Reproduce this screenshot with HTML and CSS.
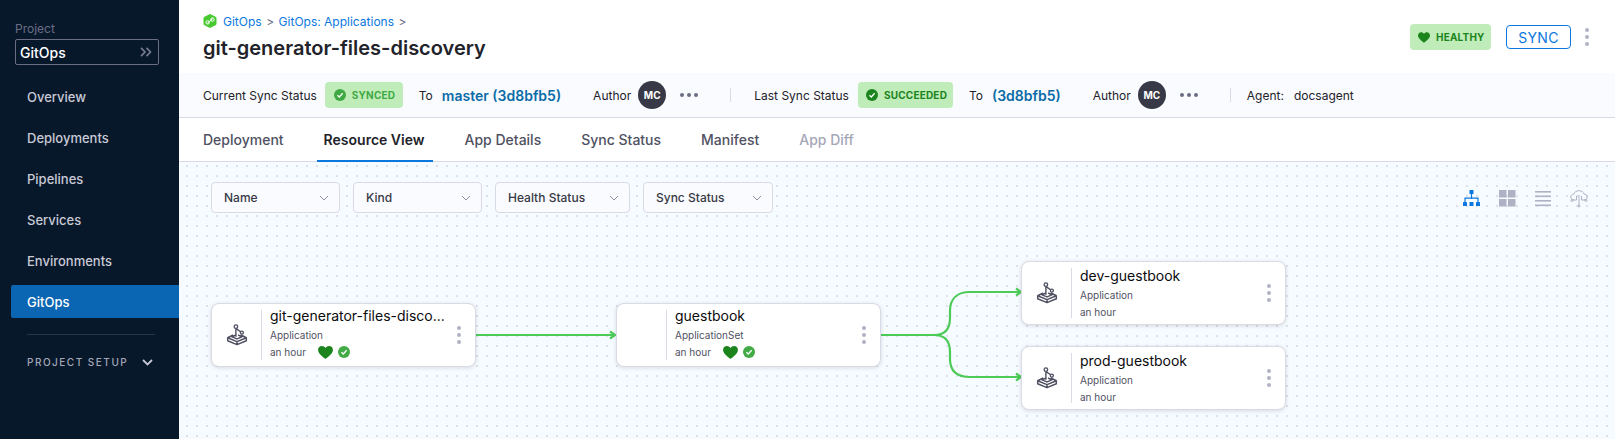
FILE: index.html
```html
<!DOCTYPE html>
<html lang="en">
<head>
    <meta charset="UTF-8">
    <title>GitOps: Applications</title>
    <link rel="stylesheet" href="styles.css">
</head>

<body>
    <svg class="defs" width="0" height="0">
        <symbol id="joystick" viewBox="0 0 20 20">
            <path d="M1.500 12.500 6.500 10M18.500 12.500 13.500 10M1.500 12.500 10 16 18.500 12.500V15.200L10 18.800 1.500 15.200ZM10 16V18.800M9 11.500V3.500M9 10 5.500 11.700 10 13.600 14.500 11.700 11 10M9.500 4.500 14 7.500" fill="none" stroke="#4f5162" stroke-width="1.300" stroke-linejoin="round"/>
            <circle cx="9" cy="2.400" r="1.600" fill="#fff" stroke="#4f5162" stroke-width="1.200"/>
            <circle cx="14.400" cy="7.800" r="1.400" fill="#fff" stroke="#4f5162" stroke-width="1.200"/>
        </symbol>
        <symbol id="heart" viewBox="0 0 16 14">
            <path d="M8 14C6 12 0 8.500 0 4.200 0 1.800 1.900 0 4.200 0 5.800 0 7.200.8 8 2.100 8.800.8 10.200 0 11.800 0 14.100 0 16 1.800 16 4.200 16 8.500 10 12 8 14Z"/>
        </symbol>
        <symbol id="check" viewBox="0 0 14 14">
            <circle cx="7" cy="7" r="7"/>
            <path d="M4 7.200 6.200 9.300 10.100 5" fill="none" stroke="#fff" stroke-width="1.500"/>
        </symbol>
        <symbol id="chevron" viewBox="0 0 10 6">
            <path d="M1 1 5 5 9 1" fill="none" stroke="currentColor" stroke-width="1"/>
        </symbol>
    </svg>

    <aside class="sidebar">
        <div class="project-label">Project</div>
        <div class="project-box">
            <span>GitOps</span>
            <svg width="12" height="10" viewBox="0 0 12 10"><path d="M1 .8 5 5 1 9.200M6.500 .8 10.500 5 6.500 9.200" fill="none" stroke="#777a90" stroke-width="1.700"/></svg>
        </div>
        <nav class="nav">
            <a class="nav-item">Overview</a>
            <a class="nav-item">Deployments</a>
            <a class="nav-item">Pipelines</a>
            <a class="nav-item">Services</a>
            <a class="nav-item">Environments</a>
            <a class="nav-item active">GitOps</a>
        </nav>
        <div class="nav-divider"></div>
        <div class="nav-section">
            <span>PROJECT SETUP</span>
            <svg width="11" height="7" viewBox="0 0 11 7"><path d="M1 1 5.500 5.500 10 1" fill="none" stroke="#c4c6d2" stroke-width="1.800"/></svg>
        </div>
    </aside>

    <main class="main">
        <header class="page-header">
            <div>
                <div class="breadcrumb">
                    <svg class="gitops-logo" width="14" height="14" viewBox="0 0 14 14">
                        <path d="M7 .5 13 3.500V10.500L7 13.500 1 10.500V3.500Z" fill="#47c92f" stroke="#47c92f" stroke-linejoin="round"/>
                        <path d="M9.800 4.700 4.200 9.300" stroke="#fff" stroke-width="1"/>
                        <circle cx="4.600" cy="8.400" r="1.700" fill="none" stroke="#fff"/>
                        <circle cx="9.400" cy="5.600" r="1.700" fill="none" stroke="#fff"/>
                    </svg>
                    <a>GitOps</a>
                    <span class="crumb-sep">&gt;</span>
                    <a>GitOps: Applications</a>
                    <span class="crumb-sep">&gt;</span>
                </div>
                <h1>git-generator-files-discovery</h1>
            </div>
            <div class="header-actions">
                <span class="badge badge-healthy">
                    <svg width="12" height="11"><use href="#heart"/></svg>
                    HEALTHY
                </span>
                <button class="sync-btn">SYNC</button>
                <span class="kebab"><i></i><i></i><i></i></span>
            </div>
        </header>

        <div class="sync-bar">
            <span class="sync-label">Current Sync Status</span>
            <span class="badge badge-synced">
                <svg width="12" height="12"><use href="#check"/></svg>
                SYNCED
            </span>
            <span class="to-label">To</span>
            <a class="revision">master (3d8bfb5)</a>
            <span class="author-label">Author</span>
            <span class="avatar">MC</span>
            <span class="more"><i></i><i></i><i></i></span>
            <span class="bar-divider bar-divider-first"></span>
            <span class="sync-label">Last Sync Status</span>
            <span class="badge badge-succeeded">
                <svg width="12" height="12"><use href="#check"/></svg>
                SUCCEEDED
            </span>
            <span class="to-label">To</span>
            <a class="revision">(3d8bfb5)</a>
            <span class="author-label">Author</span>
            <span class="avatar">MC</span>
            <span class="more"><i></i><i></i><i></i></span>
            <span class="bar-divider"></span>
            <span class="agent">Agent:</span>
            <span>docsagent</span>
        </div>

        <div class="tabs">
            <a class="tab">Deployment</a>
            <a class="tab active">Resource View</a>
            <a class="tab">App Details</a>
            <a class="tab">Sync Status</a>
            <a class="tab">Manifest</a>
            <a class="tab disabled">App Diff</a>
        </div>

        <section class="canvas">
            <div class="toolbar">
                <div class="filters">
                    <div class="filter">Name <svg width="10" height="6"><use href="#chevron"/></svg></div>
                    <div class="filter">Kind <svg width="10" height="6"><use href="#chevron"/></svg></div>
                    <div class="filter filter-health">Health Status <svg width="10" height="6"><use href="#chevron"/></svg></div>
                    <div class="filter filter-sync">Sync Status <svg width="10" height="6"><use href="#chevron"/></svg></div>
                </div>
                <div class="views">
                    <svg width="17" height="17" viewBox="0 0 17 17" fill="#0b78e0">
                        <rect x="6.500" y="0" width="4" height="4" rx=".6"/>
                        <path d="M8.500 4V9M2 12V8.200H15V12" fill="none" stroke="#0b78e0" stroke-width="1.200"/>
                        <rect x="0" y="12" width="4" height="4" rx=".6"/>
                        <rect x="6.500" y="12" width="4" height="4" rx=".6"/>
                        <rect x="13" y="12" width="4" height="4" rx=".6"/>
                    </svg>
                    <svg width="17" height="17" viewBox="0 0 17 17" fill="#b0b1c4">
                        <rect width="7.500" height="7.500"/>
                        <rect x="9" width="7.500" height="7.500"/>
                        <rect y="9" width="7.500" height="7.500"/>
                        <rect x="9" y="9" width="7.500" height="7.500"/>
                    </svg>
                    <svg width="17" height="17" viewBox="0 0 17 17" fill="#b0b1c4">
                        <rect y="1" width="16" height="1.600"/>
                        <rect y="5.500" width="16" height="1.600"/>
                        <rect y="10" width="16" height="1.600"/>
                        <rect y="14.500" width="16" height="1.600"/>
                    </svg>
                    <svg class="view-cloud" width="18" height="18" viewBox="0 0 18 18" fill="none" stroke="#b0b1c4" stroke-width="1">
                        <path d="M4 10C2 10 .8 8.700.8 7 .8 5.300 2.200 4 3.800 4.200 4.500 2 6.500.7 9 .7 11.500.7 13.500 2 14.200 4.200 15.800 4 17.200 5.300 17.200 7 17.200 8.700 16 10 14 10"/>
                        <path d="M9 5V15M6.500 6V10H2.800M11.500 6V10H15.200"/>
                        <circle cx="1.900" cy="10.500" r="1"/>
                        <circle cx="16.100" cy="10.500" r="1"/>
                        <circle cx="9" cy="16" r="1"/>
                    </svg>
                </div>
            </div>

            <svg class="edges" width="1436" height="277" viewBox="179 162 1436 277" fill="none" stroke="#4dcb58" stroke-width="2.200">
                <path d="M475 335H615M610 331.500 615 335 610 338.500" />
                <path d="M880 335H934C945 335 950 329 950 318V311C950 299 957 292 970 292H1021M1016 288.500 1021 292 1016 295.500"/>
                <path d="M934 335C945 335 950 341 950 352V359C950 371 957 377 970 377H1021M1016 373.500 1021 377 1016 380.500"/>
            </svg>

            <div class="node node-root">
                <div class="node-icon"><svg width="22" height="22"><use href="#joystick"/></svg></div>
                <div class="node-body">
                    <div class="node-name">git-generator-files-disco...</div>
                    <div class="node-kind">Application</div>
                    <div class="node-meta has-status">
                        <span>an hour</span>
                        <svg class="heart" width="15" height="13"><use href="#heart"/></svg>
                        <svg class="ok" width="12" height="12"><use href="#check"/></svg>
                    </div>
                </div>
                <span class="kebab"><i></i><i></i><i></i></span>
            </div>

            <div class="node node-set">
                <div class="node-icon"></div>
                <div class="node-body">
                    <div class="node-name">guestbook</div>
                    <div class="node-kind">ApplicationSet</div>
                    <div class="node-meta has-status">
                        <span>an hour</span>
                        <svg class="heart" width="15" height="13"><use href="#heart"/></svg>
                        <svg class="ok" width="12" height="12"><use href="#check"/></svg>
                    </div>
                </div>
                <span class="kebab"><i></i><i></i><i></i></span>
            </div>

            <div class="node node-dev">
                <div class="node-icon"><svg width="22" height="22"><use href="#joystick"/></svg></div>
                <div class="node-body">
                    <div class="node-name">dev-guestbook</div>
                    <div class="node-kind">Application</div>
                    <div class="node-meta"><span>an hour</span></div>
                </div>
                <span class="kebab"><i></i><i></i><i></i></span>
            </div>

            <div class="node node-prod">
                <div class="node-icon"><svg width="22" height="22"><use href="#joystick"/></svg></div>
                <div class="node-body">
                    <div class="node-name">prod-guestbook</div>
                    <div class="node-kind">Application</div>
                    <div class="node-meta"><span>an hour</span></div>
                </div>
                <span class="kebab"><i></i><i></i><i></i></span>
            </div>
        </section>
    </main>
</body>
</html>
```

FILE: styles.css
```css
* {
    box-sizing: border-box;
}
body {
    font-family: Inter, "Liberation Sans", sans-serif;
    margin: 0;
    display: flex;
    height: 439px;
    overflow: hidden;
    color: #22222a;
    background-color: #fff;
}
.defs {
    position: absolute;
}

/* sidebar */
.sidebar {
    width: 179px;
    flex-shrink: 0;
    background-color: #07182b;
    padding: 21px 0 0 0;
    color: #d9dae5;
}
.project-label {
    font-size: 12px;
    line-height: 15px;
    color: #6b6d85;
    padding-left: 15px;
}
.project-box {
    display: flex;
    justify-content: space-between;
    align-items: center;
    width: 144px;
    height: 26px;
    margin: 3px 0 0 15px;
    padding: 0 6px 0 4px;
    border: 1px solid #6b6d85;
    border-radius: 2px;
    font-size: 14px;
    font-weight: 500;
    color: #fff;
}
.nav {
    display: flex;
    flex-direction: column;
    gap: 8px;
    margin: 15px 0 0 11px;
}
.nav-item {
    display: flex;
    align-items: center;
    height: 33px;
    padding-left: 16px;
    font-size: 13px;
    font-weight: 500;
    color: #c9cad6;
    border-radius: 2px 0 0 2px;
}
.nav-item.active {
    background-color: #0a66b2;
    color: #fff;
}
.nav-divider {
    height: 1px;
    margin: 16px 24px 0 27px;
    background-color: #26374a;
}
.nav-section {
    display: flex;
    align-items: center;
    justify-content: space-between;
    margin: 20px 26px 0 27px;
    font-size: 10px;
    font-weight: 500;
    letter-spacing: 1.5px;
    color: #a5a7b8;
    height: 14px;
}

/* header */
.main {
    flex: 1;
    min-width: 0;
    display: flex;
    flex-direction: column;
}
.page-header {
    display: flex;
    justify-content: space-between;
    height: 73px;
    padding: 13px 26px 0 24px;
}
.breadcrumb {
    display: flex;
    align-items: center;
    height: 16px;
    font-size: 12px;
    color: #0b78e0;
}
.gitops-logo {
    margin-right: 6px;
}
.crumb-sep {
    margin: 0 4.500px;
    color: #6b6d85;
}
h1 {
    margin: 4px 0 0 0;
    font-size: 20px;
    line-height: 30px;
    font-weight: 600;
    color: #22222a;
}
.header-actions {
    display: flex;
    align-items: center;
    height: 26px;
    margin-top: 11px;
}
.badge {
    display: inline-flex;
    align-items: center;
    gap: 6px;
    height: 26px;
    border-radius: 4px;
    background-color: #c0ecb9;
    font-size: 10px;
    font-weight: 700;
    letter-spacing: .2px;
}
.badge-healthy {
    width: 81px;
    padding-left: 8px;
    color: #1b841d;
    fill: #1b841d;
}
.badge-synced {
    width: 78px;
    margin: 0 16px 0 8px;
    padding-left: 9px;
    color: #3fa944;
    fill: #3fa944;
}
.badge-succeeded {
    width: 95px;
    margin: 0 16px 0 9px;
    padding-left: 8px;
    color: #1b841d;
    fill: #1b841d;
}
.sync-btn {
    width: 65px;
    height: 24px;
    margin-left: 15px;
    padding: 0;
    border: 1px solid #0b78e0;
    border-radius: 4px;
    background-color: #fff;
    font-family: inherit;
    font-size: 14px;
    color: #0b78e0;
    letter-spacing: .3px;
}
.kebab {
    display: inline-flex;
    flex-direction: column;
    gap: 3px;
}
.kebab i {
    display: block;
    width: 4px;
    height: 4px;
    border-radius: 50%;
    background-color: #b0b1c4;
}
.header-actions .kebab {
    margin-left: 14px;
}

/* sync status bar */
.sync-bar {
    display: flex;
    align-items: center;
    height: 45px;
    padding-left: 24px;
    background-color: #fafbfe;
    border-bottom: 1px solid #d9dae5;
    font-size: 12px;
    color: #22222a;
}
.revision {
    font-size: 14px;
    font-weight: 600;
    color: #0b6ca8;
}
.to-label {
    margin-right: 9px;
}
.author-label {
    margin-left: 32px;
}
.avatar {
    display: flex;
    align-items: center;
    justify-content: center;
    width: 28px;
    height: 28px;
    margin-left: 7px;
    border-radius: 50%;
    background-color: #383946;
    color: #fff;
    font-size: 10px;
    font-weight: 700;
}
.more {
    display: inline-flex;
    gap: 3px;
    margin-left: 14px;
}
.more i {
    display: block;
    width: 4px;
    height: 4px;
    border-radius: 50%;
    background-color: #6b6d85;
}
.bar-divider {
    width: 1px;
    height: 14px;
    margin: 0 16px 0 32px;
    background-color: #d9dae5;
}
.bar-divider-first {
    margin-right: 23px;
}
.agent {
    margin-right: 10px;
}

/* tabs */
.tabs {
    display: flex;
    gap: 40px;
    height: 44px;
    padding-left: 24px;
    border-bottom: 1px solid #d9dae5;
}
.tab {
    position: relative;
    display: flex;
    align-items: center;
    font-size: 14px;
    font-weight: 500;
    color: #4f5162;
}
.tab.active {
    color: #22222a;
    font-weight: 600;
}
.tab.active::after {
    content: "";
    position: absolute;
    left: -7px;
    right: -8px;
    bottom: -1px;
    height: 2px;
    background-color: #0b78e0;
}
.tab.disabled {
    color: #a5a7b8;
}

/* resource canvas */
.canvas {
    position: relative;
    flex: 1;
    background-color: #f6fbff;
    background-image: radial-gradient(circle, #cfd1dd .6px, transparent .9px);
    background-size: 10px 10px;
    background-position: 3px -1px;
}
.toolbar {
    display: flex;
    justify-content: space-between;
    align-items: flex-start;
    padding: 20px 27px 0 32px;
}
.filters {
    display: flex;
    gap: 13px;
}
.filter {
    display: flex;
    align-items: center;
    justify-content: space-between;
    width: 129px;
    height: 31px;
    padding: 0 10px 0 12px;
    border: 1px solid #d9dae5;
    border-radius: 4px;
    background-color: #fafbfe;
    font-size: 12px;
    font-weight: 500;
    color: #383946;
}
.filter svg {
    color: #8f90a6;
}
.filter-health {
    width: 135px;
}
.filter-sync {
    width: 130px;
}
.views {
    display: flex;
    gap: 19px;
    margin-top: 8px;
}
.view-cloud {
    margin-left: -1px;
}
.edges {
    position: absolute;
    left: 0;
    top: 0;
}
.node {
    position: absolute;
    display: flex;
    align-items: center;
    width: 265px;
    height: 64px;
    border: 1px solid #d9dae5;
    border-radius: 8px;
    background-color: #fff;
    box-shadow: 0 1px 4px rgba(96, 97, 112, .2);
}
.node-root {
    left: 32px;
    top: 141px;
}
.node-set {
    left: 437px;
    top: 141px;
}
.node-dev {
    left: 842px;
    top: 99px;
}
.node-prod {
    left: 842px;
    top: 184px;
}
.node-icon {
    display: flex;
    align-items: center;
    justify-content: center;
    width: 50px;
    height: 50px;
    flex-shrink: 0;
    border-right: 1px solid #d9dae5;
}
.node-body {
    flex: 1;
    min-width: 0;
    padding-left: 8px;
}
.node-name {
    font-size: 14px;
    line-height: 18px;
    color: #0b0b0d;
}
.node-kind {
    margin-top: 3px;
    font-size: 10px;
    line-height: 14px;
    color: #4f5162;
}
.node-meta {
    display: flex;
    align-items: center;
    height: 14px;
    margin-top: 3px;
    font-size: 10px;
    color: #4f5162;
}
.node-meta.has-status {
    margin-bottom: 4px;
}
.heart {
    margin-left: 12px;
    fill: #1b841d;
}
.ok {
    margin-left: 5px;
    fill: #42ab45;
}
.node .kebab {
    margin-right: 14px;
    gap: 3px;
}
```
